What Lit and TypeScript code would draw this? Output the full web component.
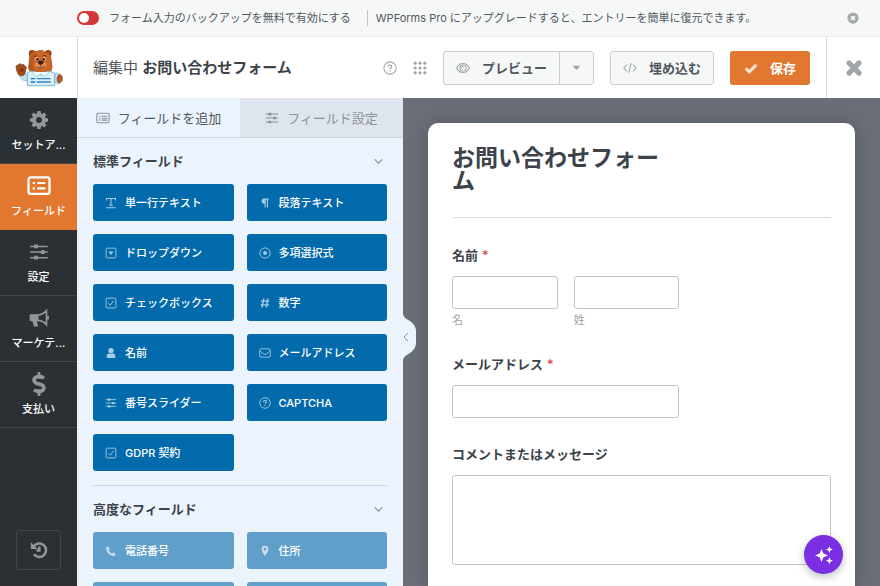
import { LitElement, html, css, svg, nothing } from "lit";
import { customElement, property } from "lit/decorators.js";
import { classMap } from "lit/directives/class-map.js";

const icons: Record<string, unknown> = {
  text: svg`<path stroke-width="1.400" d="M2 4.500V2h12v2.500M8 2v9M5.500 11h5M1.500 14.300h13" />`,
  paragraph: svg`<path class="solid" d="M6.500 2H13v1.600h-1V14h-1.500V3.600H9V14H7.500V9A3.500 3.500 0 0 1 6.500 2z" />`,
  dropdown: svg`<rect x="1.500" y="1.500" width="13" height="13" rx="1.500" /><path class="solid" d="M4.500 6h7L8 10.500z" />`,
  radio: svg`<circle cx="8" cy="8" r="6.800" /><circle class="solid" cx="8" cy="8" r="2.600" />`,
  check: svg`<rect x="1.500" y="1.500" width="13" height="13" rx="1.500" /><path d="M4.500 8.500 7 11l4.500-6" />`,
  hash: svg`<path stroke-width="1.800" d="M6.500 2 4 14M12 2 9.500 14M2.500 5.500H14M2 10.500h11.500" />`,
  user: svg`<circle class="solid" cx="8" cy="4.800" r="3.600" /><path class="solid" d="M2.500 14.500c-1-3 .5-6 3-6.200 1.500 1 3.500 1 5 0 2.500.2 4 3.200 3 6.200z" />`,
  mail: svg`<rect x="1" y="2.500" width="14" height="11" rx="1.500" /><path d="M1.500 5.500C4 8 6.500 9.800 8 9.800s4-1.800 6.500-4.300" />`,
  sliders: svg`<path d="M1 3.500h14M1 8h14M1 12.500h14" /><path class="solid" d="M4 2h3v3H4zM9.500 6.500h3v3h-3zM4 11h3v3H4z" />`,
  help: svg`<circle cx="8" cy="8" r="7" /><path stroke-width="1.400" d="M6 6.500C6 4 10 4 10 6.300 10 7.800 8 7.800 8 9.300M8 10.600v1.400" />`,
  phone: svg`<path class="solid" d="M2.500 2.500 4.500 2l1.600 3.200L4.800 6.700c1 2 2.500 3.500 4.500 4.500l1.500-1.300 3.200 1.600-.5 2c-.2.900-.8 1-1.700 1C6.500 14.500 1.500 9.500 1.500 4.200c0-.9.1-1.500 1-1.700z" />`,
  pin: svg`<path class="solid" fill-rule="evenodd" d="M8 1a4.500 4.500 0 0 1 4.500 4.500C12.500 9 9 12 8 15 7 12 3.500 9 3.500 5.500A4.500 4.500 0 0 1 8 1zm0 2.800a1.800 1.800 0 1 0 0 3.600 1.800 1.800 0 0 0 0-3.600z" />`,
  list: svg`<rect x="1" y="2.500" width="14" height="11" rx="1.500" /><path d="M6.500 6H13M6.500 8.200H13M6.500 10.400H13M3.500 6H5M3.500 8.200H5M3.500 10.400H5" />`,
  listBold: svg`<rect x="1" y="2.300" width="14" height="11" rx="1.500" stroke-width="1.500" /><path stroke-width="1.400" d="M6.800 6H12.300M6.800 9.600H12.300M3.800 6h1.500M3.800 9.600h1.500" />`,
  chevron: svg`<path stroke-width="1.600" d="m2.500 5 5.500 5.500L13.500 5" />`,
  caret: svg`<path class="solid" d="M1 5h14l-7 7.500z" />`,
  apps: svg`${[2.5, 8, 13.5].map((y) => [2.5, 8, 13.5].map((x) => svg`<circle class="solid" cx=${x} cy=${y} r="1.800" />`))}`,
  eye: svg`<path d="M.7 8C2.500 4.500 5 2.800 8 2.800S13.500 4.500 15.300 8C13.500 11.500 11 13.200 8 13.200S2.500 11.500.7 8z" /><circle cx="8" cy="8" r="3.500" /><path d="M6.300 8.300c0-1.300.8-2 2-2" />`,
  code: svg`<path d="M4.500 4 1 8l3.500 4M11.500 4 15 8l-3.500 4M9.500 2.500l-3 11" />`,
  tick: svg`<path stroke-width="3.600" d="m2 8.500 4 3.800 8-8" />`,
  cross: svg`<path stroke-width="4.600" stroke-linecap="round" d="m3.500 3.500 9 9M12.500 3.500l-9 9" />`,
  dismiss: svg`<circle class="solid" cx="8" cy="8" r="7.500" /><path class="cut" d="m5.500 5.500 5 5M10.500 5.500l-5 5" />`,
  horn: svg`<path class="solid" d="M1.500 5H7v5.500H6.200l1.300 4.300H4L2.700 10.500h-1.200A1 1 0 0 1 .5 9.500V6a1 1 0 0 1 1-1z" /><path stroke-width="1.300" d="M7 5.600c3 0 5.300-1.600 7-3.500v11.300c-1.700-1.900-4-3.500-7-3.500zM15.300 6.300v2.800" />`,
  history: svg`<path stroke-width="2.200" d="M3.200 5A6 6 0 1 1 3.500 11.800M8.300 4.800V8.500H5.800" /><path class="solid" d="M.8 1.200v6h6z" />`,
  sparkles: svg`<path class="solid" d="M6 3.200 7.500 6.800 11.200 8.300 7.500 9.800 6 13.500 4.500 9.800.8 8.300 4.500 6.800zM12.300.8l.8 2 2 .8-2 .8-.8 2-.8-2-2-.8 2-.8zM12.300 9.700l.8 2 2 .8-2 .8-.8 2-.8-2-2-.8 2-.8z" />`,
};

const iconStyles = css`
  .icon {
    flex: none;
    display: block;
    width: 12px;
    height: 12px;
    fill: none;
    stroke: currentColor;
    stroke-width: 1.2;
  }
  .icon .solid {
    fill: currentColor;
    stroke: none;
  }
  .icon .cut {
    stroke: #f6f7f7;
    stroke-width: 2.4;
  }
`;

const controlStyles = css`
  * {
    box-sizing: border-box;
  }
  button,
  input,
  textarea {
    font: inherit;
    color: inherit;
    margin: 0;
  }
  button {
    padding: 0;
    border: 0;
    background: none;
    cursor: pointer;
  }
`;

const icon = (name: string, extra = "") =>
  html`<svg class="icon ${extra}" viewBox="0 0 16 16" aria-hidden="true">${icons[name]}</svg>`;

const gear = html`<svg class="icon nav-icon gear" viewBox="0 128 1536 1536" aria-hidden="true">
  <path class="solid" d="M1024 896q0-106-75-181t-181-75-181 75-75 181 75 181 181 75 181-75 75-181zm512-109v222q0 12-8 23t-20 13l-185 28q-19 54-39 91 35 50 107 138 10 12 10 25t-9 23q-27 37-99 108t-94 71q-12 0-26-9l-138-108q-44 23-91 38-16 136-29 186-7 28-36 28h-222q-14 0-24.500-8.500t-11.500-21.500l-28-184q-49-16-90-37l-141 107q-10 9-25 9-14 0-25-11-126-114-165-168-7-10-7-23 0-12 8-23 15-21 51-66.500t54-70.500q-27-50-41-99l-183-27q-13-2-21-12.500t-8-23.500v-222q0-12 8-23t19-13l186-28q14-46 39-92-40-57-107-138-10-12-10-24 0-10 9-23 26-36 98.500-107.500t94.500-71.500q13 0 26 10l138 107q44-23 91-38 16-136 29-186 7-28 36-28h222q14 0 24.500 8.500t11.500 21.500l28 184q49 16 90 37l142-107q9-9 24-9 13 0 25 10 129 119 165 170 7 8 7 22 0 12-8 23-15 21-51 66.500t-54 70.500q26 50 41 98l183 28q13 2 21 12.500t8 23.500z" />
</svg>`;

const dollar = html`<svg class="icon nav-icon" viewBox="0 0 288 512" aria-hidden="true">
  <path class="solid" d="M209.200 233.400l-108-31.600C88.700 198.200 80 186.500 80 173.500c0-16.300 13.200-29.500 29.500-29.500h66.300c12.200 0 24.200 3.700 34.200 10.500 6.100 4.100 14.300 3.100 19.500-2l34.800-34c7.100-6.900 6.100-18.400-1.800-24.500C238 74.800 207.400 64.100 176 64V16c0-8.800-7.200-16-16-16h-32c-8.800 0-16 7.200-16 16v48h-2.500C45.800 64-5.400 118.700.5 183.600c4.200 46.100 39.400 83.600 83.800 96.600l102.500 30c12.500 3.700 21.200 15.300 21.200 28.300 0 16.300-13.200 29.500-29.500 29.500h-66.300C100 368 88 364.300 78 357.500c-6.100-4.100-14.300-3.100-19.500 2l-34.800 34c-7.100 6.900-6.100 18.400 1.800 24.500 24.500 19.200 55.100 29.900 86.500 30v48c0 8.800 7.200 16 16 16h32c8.800 0 16-7.200 16-16v-48.200c46.600-.9 90.300-28.600 105.700-72.700 21.500-61.600-14.600-124.800-72.500-141.700z" />
</svg>`;

const bear = html`<svg class="bear" viewBox="14 13 144 112" role="img" aria-label="WPForms">
  <path d="M26 86c8 6 16 4 24-2l6 10-6 14c-12-1-22-6-24-22z" fill="#bfe0f1" stroke="#7fb3cc" stroke-width="2" />
  <path d="M136 84c12 0 20 8 20 18s-8 14-16 14l-8-6z" fill="#bfe0f1" stroke="#7fb3cc" stroke-width="2" />
  <path d="M148 88c10 4 11 22-2 26-8-2-8-22 2-26z" fill="#b85a1e" stroke="#7c3a14" stroke-width="2" />
  <path d="M18 70c-3-8 3-12 6-8 0-7 8-8 9-1 3-6 10-3 9 3 6-2 8 5 4 10-1 12-4 18-13 18-10 0-13-10-15-22z" fill="#a64d1a" stroke="#6d3110" stroke-width="2" />
  <path d="M27 74c2-6 12-6 13 0 1 8-12 9-13 0z" fill="#7c3512" />
  <circle cx="65" cy="25" r="9" fill="#a64d1a" stroke="#6d3110" stroke-width="2" />
  <circle cx="114" cy="25" r="9" fill="#a64d1a" stroke="#6d3110" stroke-width="2" />
  <path d="M58 34c2-12 14-15 25-15l5-4 3 3 5-3 2 5c12 0 21 4 23 15l4 31c0 14-12 22-34 22s-36-8-36-20z" fill="#cd6624" stroke="#843d14" stroke-width="2" />
  <path d="M61 38c2-9 9-13 20-14-9 6-13 18-13 30-1 12 3 22 10 29-14-2-22-8-22-16z" fill="#b75619" />
  <circle cx="80" cy="42" r="5" fill="#fff" /><circle cx="101" cy="42" r="5" fill="#fff" />
  <circle cx="81" cy="43" r="4" fill="#281a15" /><circle cx="100" cy="43" r="4" fill="#281a15" />
  <path d="M72 35l10-3M97 31l10 2" stroke="#63300f" stroke-width="3" />
  <ellipse cx="91" cy="60" rx="17" ry="12" fill="#e08c4c" />
  <path d="M82 50c4-4 14-4 18 0 0 6-5 9-9 9s-9-3-9-9z" fill="#38221a" />
  <path d="M91 59v5M81 66c7 5 16 4 22-2" stroke="#643116" stroke-width="3" fill="none" />
  <path d="M51 84c8-6 16-6 24-4l16 10 17-10c10-2 18 0 25 5v37H51z" fill="#d9effa" stroke="#79b5d3" stroke-width="3" />
  <path d="m67 81 9 14 15-7 15 7 10-14" fill="#eef8fd" stroke="#8bbdd4" stroke-width="2" />
  <path d="M61 101h13M61 111h13" stroke="#2377ae" stroke-width="4" />
  <path d="M79 101h42M79 111h42" stroke="#3189bd" stroke-width="4" />
</svg>`;

interface FieldDef {
  icon: string;
  label: string;
}

@customElement("field-group")
class FieldGroup extends LitElement {
  @property() heading = "";
  @property({ attribute: false }) fields: FieldDef[] = [];
  @property({ type: Boolean }) pro = false;

  static styles = [
    controlStyles,
    iconStyles,
    css`
      :host {
        display: block;
      }
      .heading {
        display: flex;
        align-items: center;
        justify-content: space-between;
        width: 100%;
        height: 46px;
        padding-right: 3px;
        font-size: 13px;
        font-weight: 600;
        line-height: 20px;
        color: #3c434a;
      }
      .heading .icon {
        width: 11px;
        height: 11px;
        color: #86909b;
      }
      .grid {
        display: grid;
        grid-template-columns: 1fr 1fr;
        gap: 13px;
      }
      .field {
        display: flex;
        align-items: center;
        gap: 8px;
        height: 37px;
        padding: 0 12px;
        border-radius: 3px;
        background: #036aab;
        color: #fff;
        font-size: 11px;
        font-weight: 500;
        line-height: 16px;
        white-space: nowrap;
      }
      .field .icon {
        opacity: 0.65;
      }
      .pro {
        background: #609fca;
      }
    `,
  ];

  render() {
    return html`
      <button class="heading" aria-expanded="true">${this.heading}${icon("chevron")}</button>
      <div class="grid">
        ${this.fields.map(
          (f) => html`<button class=${classMap({ field: true, pro: this.pro })}>${icon(f.icon)}<span>${f.label}</span></button>`
        )}
      </div>
    `;
  }
}

@customElement("form-preview")
class FormPreview extends LitElement {
  static styles = [
    controlStyles,
    css`
      :host {
        display: block;
        min-height: 100%;
        padding: 24px 24px 0;
        background: #fff;
        border-radius: 10px 10px 0 0;
        box-shadow: 0 0 20px rgba(0, 0, 0, 0.18);
        color: #3c434a;
      }
      h2 {
        margin: 0;
        max-width: 60%;
        font-size: 23px;
        font-weight: 700;
        line-height: 23px;
      }
      .title {
        padding-bottom: 24px;
        margin-bottom: 27px;
        border-bottom: 1px solid #dcdcde;
      }
      .block {
        display: flex;
        flex-direction: column;
        align-items: flex-start;
        margin: 0 0 26px;
        font-size: 13px;
        line-height: 20px;
      }
      .caption {
        margin-bottom: 11px;
        font-weight: 600;
      }
      .star {
        margin-left: 4px;
        color: #d63638;
        font-weight: 400;
      }
      .names {
        display: grid;
        grid-template-columns: 1fr 1fr;
        gap: 16px;
        width: 60%;
      }
      .part {
        display: flex;
        flex-direction: column;
        gap: 3px;
      }
      .part label {
        font-size: 11px;
        line-height: 16px;
        color: #a0a2a5;
      }
      input,
      textarea {
        display: block;
        width: 100%;
        height: 33px;
        padding: 0 8px;
        border: 1px solid #c3c4c7;
        border-radius: 3px;
        background: #fff;
      }
      .medium {
        width: 60%;
      }
      textarea {
        height: 90px;
        resize: none;
      }
    `,
  ];

  render() {
    return html`
      <div class="title"><h2>お問い合わせフォーム</h2></div>
      <div class="block" role="group" aria-labelledby="name">
        <span class="caption" id="name">名前<span class="star">*</span></span>
        <div class="names">
          <div class="part"><input id="first" /><label for="first">名</label></div>
          <div class="part"><input id="last" /><label for="last">姓</label></div>
        </div>
      </div>
      <div class="block">
        <label class="caption" for="email">メールアドレス<span class="star">*</span></label>
        <input class="medium" id="email" type="email" />
      </div>
      <div class="block">
        <label class="caption" for="comment">コメントまたはメッセージ</label>
        <textarea id="comment"></textarea>
      </div>
    `;
  }
}

@customElement("app-root")
class AppRoot extends LitElement {
  static styles = [
    controlStyles,
    iconStyles,
    css`
      :host {
        display: flex;
        flex-direction: column;
        height: 100vh;
        overflow: hidden;
        font-family: Inter, "Noto Sans CJK JP", sans-serif;
        color: #50575e;
      }
      .notice {
        flex: none;
        display: flex;
        align-items: center;
        height: 36px;
        padding: 0 21px 0 77px;
        background: #f6f7f7;
        font-size: 11px;
        line-height: 16px;
        white-space: nowrap;
      }
      .backup {
        display: flex;
        align-items: center;
        gap: 10px;
      }
      .switch {
        appearance: none;
        width: 22px;
        height: 14px;
        padding: 2px;
        border-radius: 7px;
        background: #d63638;
      }
      .switch::before {
        content: "";
        display: block;
        width: 10px;
        height: 10px;
        border-radius: 5px;
        background: #fff;
      }
      .upgrade {
        flex: 1;
        margin-left: 16px;
        padding-left: 8px;
        border-left: 1px solid #c3c4c7;
      }
      .notice button {
        color: #a7aaad;
      }
      .header {
        flex: none;
        display: flex;
        align-items: center;
        height: 62px;
        border-top: 1px solid #ebeced;
        background: #fff;
      }
      .logo {
        flex: none;
        display: flex;
        align-items: center;
        width: 78px;
        height: 100%;
        padding-left: 15px;
        border-right: 1px solid #dcdcde;
      }
      .bear {
        width: 48px;
        height: 38px;
      }
      h1 {
        flex: 1;
        margin: 0;
        padding-left: 15px;
        font-size: 15px;
        font-weight: 400;
        line-height: 24px;
        white-space: nowrap;
      }
      h1 strong {
        font-weight: 700;
        color: #3c434a;
      }
      .tools {
        display: flex;
        align-items: center;
        gap: 16px;
        height: 100%;
        color: #a1a5a9;
      }
      .tools .icon {
        width: 14px;
        height: 14px;
      }
      .split {
        display: flex;
        border: 1px solid #c9cdd0;
        border-radius: 3px;
        background: #f6f7f7;
      }
      .split .btn {
        height: 32px;
      }
      .btn {
        display: flex;
        align-items: center;
        gap: 12px;
        height: 34px;
        padding: 0 12px;
        border-radius: 3px;
        font-size: 13px;
        font-weight: 600;
        line-height: 20px;
        white-space: nowrap;
      }
      .btn span {
        color: #50575e;
      }
      .btn.more {
        border-left: 1px solid #c9cdd0;
        border-radius: 0;
      }
      .tools .more .icon {
        width: 9px;
        height: 9px;
      }
      .embed {
        border: 1px solid #c9cdd0;
        background: #f6f7f7;
      }
      .save {
        padding: 0 14px;
        background: #e27730;
        color: #f9dfcc;
      }
      .save span {
        color: #fff;
        font-weight: 700;
      }
      .close {
        display: flex;
        align-items: center;
        justify-content: center;
        width: 54px;
        height: 100%;
        border-left: 1px solid #dcdcde;
      }
      .tools .close .icon {
        width: 18px;
        height: 18px;
      }
      .body {
        flex: 1;
        display: flex;
        min-height: 0;
      }
      .nav {
        flex: none;
        display: flex;
        flex-direction: column;
        width: 77px;
        background: #2b3034;
      }
      .item {
        display: flex;
        flex-direction: column;
        align-items: center;
        gap: 4px;
        height: 66px;
        padding-top: 10px;
        border-bottom: 1px solid #41464a;
        color: #fff;
        font-size: 11px;
        font-weight: 500;
        line-height: 18px;
        text-decoration: none;
      }
      .item.active {
        background: #e27730;
        border-color: #e27730;
      }
      .nav-icon {
        width: 24px;
        height: 24px;
        color: #92969a;
      }
      .nav-icon.narrow {
        padding: 2px;
      }
      .nav-icon.gear {
        padding: 3px;
      }
      .active .nav-icon {
        color: #fff;
      }
      .history {
        display: flex;
        align-items: center;
        justify-content: center;
        width: 45px;
        height: 40px;
        margin: auto auto 16px;
        border: 1px solid #41464a;
        border-radius: 3px;
        color: #92969a;
      }
      .history .icon {
        width: 18px;
        height: 18px;
      }
      .panel {
        position: relative;
        flex: none;
        width: 326px;
        background: #ebf3fc;
      }
      .scroll {
        height: 100%;
        overflow: hidden auto;
        scrollbar-width: none;
      }
      .tabs {
        display: grid;
        grid-template-columns: 1fr 1fr;
        height: 40px;
      }
      .tab {
        display: flex;
        align-items: center;
        justify-content: center;
        gap: 8px;
        border-bottom: 1px solid #ced7e0;
        font-size: 13px;
        line-height: 20px;
      }
      .tab .icon {
        width: 14px;
        height: 14px;
        color: #86909b;
      }
      .tab.off {
        background: #dfe5ed;
        color: #8c939b;
      }
      .groups {
        padding: 0 16px;
      }
      field-group + field-group {
        margin-top: 14px;
        border-top: 1px solid #ced7e0;
      }
      .collapse {
        position: absolute;
        z-index: 1;
        top: 216px;
        left: 100%;
        width: 13px;
        height: 46px;
        color: #86909b;
      }
      .tongue {
        display: block;
        width: 13px;
        height: 46px;
      }
      .canvas {
        flex: 1;
        min-width: 0;
        padding: 25px 25px 0;
        overflow: hidden auto;
        scrollbar-width: none;
        background: #6a6e76;
      }
      .assistant {
        position: fixed;
        right: 37px;
        bottom: 12px;
        display: flex;
        align-items: center;
        justify-content: center;
        width: 39px;
        height: 39px;
        border-radius: 50%;
        background: #7a30e2;
        color: #fff;
        box-shadow: 0 3px 8px rgba(0, 0, 0, 0.25);
      }
      .assistant .icon {
        width: 20px;
        height: 20px;
      }
    `,
  ];

  private nav = [
    { label: "セットア...", icon: gear, active: false },
    { label: "フィールド", icon: icon("listBold", "nav-icon"), active: true },
    { label: "設定", icon: icon("sliders", "nav-icon narrow"), active: false },
    { label: "マーケテ...", icon: icon("horn", "nav-icon narrow"), active: false },
    { label: "支払い", icon: dollar, active: false },
  ];

  private standard: FieldDef[] = [
    { icon: "text", label: "単一行テキスト" },
    { icon: "paragraph", label: "段落テキスト" },
    { icon: "dropdown", label: "ドロップダウン" },
    { icon: "radio", label: "多項選択式" },
    { icon: "check", label: "チェックボックス" },
    { icon: "hash", label: "数字" },
    { icon: "user", label: "名前" },
    { icon: "mail", label: "メールアドレス" },
    { icon: "sliders", label: "番号スライダー" },
    { icon: "help", label: "CAPTCHA" },
    { icon: "check", label: "GDPR 契約" },
  ];

  private advanced: FieldDef[] = [
    { icon: "phone", label: "電話番号" },
    { icon: "pin", label: "住所" },
    { icon: "", label: "" },
    { icon: "", label: "" },
  ];

  render() {
    return html`
      <div class="notice">
        <label class="backup"><input class="switch" type="checkbox" role="switch" />フォーム入力のバックアップを無料で有効にする</label>
        <span class="upgrade">WPForms Pro にアップグレードすると、エントリーを簡単に復元できます。</span>
        <button aria-label="閉じる">${icon("dismiss")}</button>
      </div>
      <header class="header">
        <div class="logo">${bear}</div>
        <h1>編集中 <strong>お問い合わせフォーム</strong></h1>
        <div class="tools">
          <button aria-label="ヘルプ">${icon("help")}</button>
          <button aria-label="メニュー">${icon("apps")}</button>
          <div class="split">
            <button class="btn">${icon("eye")}<span>プレビュー</span></button>
            <button class="btn more" aria-label="その他">${icon("caret")}</button>
          </div>
          <button class="btn embed">${icon("code")}<span>埋め込む</span></button>
          <button class="btn save">${icon("tick")}<span>保存</span></button>
          <button class="close" aria-label="閉じる">${icon("cross")}</button>
        </div>
      </header>
      <div class="body">
        <nav class="nav">
          ${this.nav.map(
            (n) => html`<a class=${classMap({ item: true, active: n.active })} href="#" aria-current=${n.active ? "page" : nothing}>${n.icon}<span>${n.label}</span></a>`
          )}
          <button class="history" aria-label="履歴">${icon("history")}</button>
        </nav>
        <aside class="panel">
          <div class="scroll">
            <div class="tabs">
              <button class="tab">${icon("list")}フィールドを追加</button>
              <button class="tab off">${icon("sliders")}フィールド設定</button>
            </div>
            <div class="groups">
              <field-group heading="標準フィールド" .fields=${this.standard}></field-group>
              <field-group heading="高度なフィールド" pro .fields=${this.advanced}></field-group>
            </div>
          </div>
          <button class="collapse" aria-label="パネルを閉じる">
            <svg class="tongue" viewBox="0 0 13 46" aria-hidden="true">
              <path fill="#ebf3fc" d="M0 0C1 4 4 5 7 7c4 3 6 6 6 10v12c0 4-2 7-6 10-3 2-6 3-7 7z" />
              <path fill="none" stroke="currentColor" d="m5 19-4 4 4 4" />
            </svg>
          </button>
        </aside>
        <main class="canvas"><form-preview></form-preview></main>
      </div>
      <button class="assistant" aria-label="AI アシスタント">${icon("sparkles")}</button>
    `;
  }
}
